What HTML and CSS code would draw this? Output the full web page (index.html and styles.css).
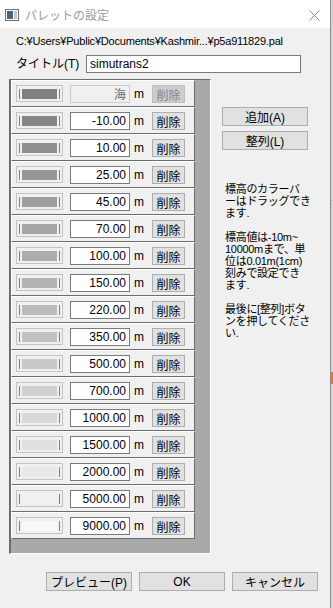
FILE: index.html
```html
<!DOCTYPE html>
<html lang="ja">
<head>
<meta charset="UTF-8" />
<title>パレットの設定</title>
<link rel="stylesheet" href="styles.css">
</head>
<body>
<div class="window">
  <!-- Title bar -->
  <div class="titlebar">
    <svg class="app-icon" width="14" height="12" viewBox="0 0 14 12">
      <rect x="0.5" y="0.5" width="13" height="11" fill="#fff" stroke="#6f6f6f"/>
      <rect x="2" y="2" width="6" height="8" fill="#4a6580"/>
      <rect x="9" y="2" width="3" height="8" fill="#c8c8c8"/>
    </svg>
    <span class="title">パレットの設定</span>
    <svg class="close" width="11" height="11" viewBox="0 0 11 11">
      <path d="M0.5 0.5 L10.5 10.5 M10.5 0.5 L0.5 10.5" stroke="#8a8a8a" stroke-width="1"/>
    </svg>
  </div>

  <div class="path">C:¥Users¥Public¥Documents¥Kashmir...¥p5a911829.pal</div>

  <div class="title-row">
    <label class="title-label">タイトル(T)</label>
    <input class="title-input" value="simutrans2"/>
  </div>

  <div class="main">
    <!-- Height list -->
    <div class="panel">
      <div class="row">
        <div class="swatch"><div class="fill" style="background:#808080"></div></div>
        <input class="height disabled" value="海" disabled/>
        <span class="unit">m</span>
        <button class="del" disabled>削除</button>
      </div>
      <div class="row">
        <div class="swatch"><div class="fill" style="background:#868686"></div></div>
        <input class="height" value="-10.00"/>
        <span class="unit">m</span>
        <button class="del">削除</button>
      </div>
      <div class="row">
        <div class="swatch"><div class="fill" style="background:#8e8e8e"></div></div>
        <input class="height" value="10.00"/>
        <span class="unit">m</span>
        <button class="del">削除</button>
      </div>
      <div class="row">
        <div class="swatch"><div class="fill" style="background:#969696"></div></div>
        <input class="height" value="25.00"/>
        <span class="unit">m</span>
        <button class="del">削除</button>
      </div>
      <div class="row">
        <div class="swatch"><div class="fill" style="background:#9e9e9e"></div></div>
        <input class="height" value="45.00"/>
        <span class="unit">m</span>
        <button class="del">削除</button>
      </div>
      <div class="row">
        <div class="swatch"><div class="fill" style="background:#a6a6a6"></div></div>
        <input class="height" value="70.00"/>
        <span class="unit">m</span>
        <button class="del">削除</button>
      </div>
      <div class="row">
        <div class="swatch"><div class="fill" style="background:#adadad"></div></div>
        <input class="height" value="100.00"/>
        <span class="unit">m</span>
        <button class="del">削除</button>
      </div>
      <div class="row">
        <div class="swatch"><div class="fill" style="background:#b4b4b4"></div></div>
        <input class="height" value="150.00"/>
        <span class="unit">m</span>
        <button class="del">削除</button>
      </div>
      <div class="row">
        <div class="swatch"><div class="fill" style="background:#bbbbbb"></div></div>
        <input class="height" value="220.00"/>
        <span class="unit">m</span>
        <button class="del">削除</button>
      </div>
      <div class="row">
        <div class="swatch"><div class="fill" style="background:#c2c2c2"></div></div>
        <input class="height" value="350.00"/>
        <span class="unit">m</span>
        <button class="del">削除</button>
      </div>
      <div class="row">
        <div class="swatch"><div class="fill" style="background:#c9c9c9"></div></div>
        <input class="height" value="500.00"/>
        <span class="unit">m</span>
        <button class="del">削除</button>
      </div>
      <div class="row">
        <div class="swatch"><div class="fill" style="background:#d0d0d0"></div></div>
        <input class="height" value="700.00"/>
        <span class="unit">m</span>
        <button class="del">削除</button>
      </div>
      <div class="row">
        <div class="swatch"><div class="fill" style="background:#d8d8d8"></div></div>
        <input class="height" value="1000.00"/>
        <span class="unit">m</span>
        <button class="del">削除</button>
      </div>
      <div class="row">
        <div class="swatch"><div class="fill" style="background:#e0e0e0"></div></div>
        <input class="height" value="1500.00"/>
        <span class="unit">m</span>
        <button class="del">削除</button>
      </div>
      <div class="row">
        <div class="swatch"><div class="fill" style="background:#e8e8e8"></div></div>
        <input class="height" value="2000.00"/>
        <span class="unit">m</span>
        <button class="del">削除</button>
      </div>
      <div class="row">
        <div class="swatch"><div class="fill" style="background:#f0f0f0"></div></div>
        <input class="height" value="5000.00"/>
        <span class="unit">m</span>
        <button class="del">削除</button>
      </div>
      <div class="row">
        <div class="swatch"><div class="fill" style="background:#f8f8f8"></div></div>
        <input class="height" value="9000.00"/>
        <span class="unit">m</span>
        <button class="del">削除</button>
      </div>
    </div>

    <!-- Side buttons and help -->
    <div class="side">
      <button class="btn side-btn">追加(A)</button>
      <button class="btn side-btn">整列(L)</button>
      <div class="help">
        <p>標高のカラーバ<br>ーはドラッグでき<br>ます.</p>
        <p>標高値は-10m~<br>10000mまで、単<br>位は0.01m(1cm)<br>刻みで設定でき<br>ます.</p>
        <p>最後に[整列]ボタ<br>ンを押してくださ<br>い.</p>
      </div>
    </div>
  </div>

  <div class="footer">
    <button class="btn">プレビュー(P)</button>
    <button class="btn">OK</button>
    <button class="btn">キャンセル</button>
  </div>
</div>
<div class="backdrop">
  <div class="mark"></div>
</div>
</body>
</html>
```

FILE: styles.css
```css
html, body {
  margin: 0;
  padding: 0;
  height: 100%;
}

body {
  display: flex;
  width: 333px;
  height: 608px;
  overflow: hidden;
  font-family: "Liberation Sans", "Noto Sans CJK JP", sans-serif;
  font-size: 12px;
  color: #000;
  background: #d9d9d9;
}

.window {
  width: 330px;
  height: 608px;
  background: #f0f0f0;
  border-right: 1px solid #8c8c8c;
  display: flex;
  flex-direction: column;
}

.backdrop {
  flex: 1;
  background: linear-gradient(#d4d4d4 0, #d4d4d4 200px, #bdbdbd 200px, #bdbdbd 201px, #d4d4d4 201px);
  position: relative;
}

.mark {
  position: absolute;
  left: 0;
  right: 0;
  top: 372px;
  height: 12px;
  background: #e07a3a;
}

/* title bar */
.titlebar {
  height: 28px;
  background: #fff;
  display: flex;
  align-items: center;
  padding-left: 5px;
  padding-right: 10px;
}

.app-icon {
  margin-top: 1px;
}

.title {
  margin-left: 6px;
  color: #9a9a9a;
  font-size: 12px;
  flex: 1;
}

.close {
  margin-top: 2px;
}

.path {
  padding: 6px 0 0 16px;
  line-height: 14px;
  font-size: 11px;
  letter-spacing: -0.2px;
  white-space: nowrap;
}

.title-row {
  display: flex;
  align-items: center;
  margin-top: 7px;
  padding-left: 16px;
}

.title-label {
  width: 70px;
  line-height: 18px;
}

.title-input {
  width: 207px;
  height: 16px;
  margin: 0;
  padding: 0 3px;
  border: 1px solid #7a7a7a;
  font: inherit;
  background: #fff;
}

.main {
  display: flex;
  margin-top: 6px;
}

/* height list */
.panel {
  margin-left: 9px;
  width: 199px;
  height: 473px;
  background: #a9a9a9;
  border-style: solid;
  border-width: 1px 1px 1px 2px;
  border-color: #6d6d6d #fff #fff #6d6d6d;
}

.row {
  width: 178px;
  height: 25px;
  background: #f0f0f0;
  border-style: solid;
  border-width: 1px;
  border-color: #fff #6d6d6d #6d6d6d #fff;
  display: flex;
  align-items: center;
  padding-left: 4px;
}

.swatch {
  width: 47px;
  height: 17px;
  border: 1px solid #c4c4c4;
  background: #f0f0f0;
  display: flex;
  align-items: center;
  padding: 0 2px;
  box-sizing: border-box;
  flex: none;
}

.fill {
  flex: 1;
  height: 10px;
  border-left: 1px solid #808080;
  border-right: 1px solid #808080;
  padding: 0 2px;
  background-clip: content-box !important;
  box-sizing: border-box;
}

.height {
  margin: 0 0 0 7px;
  width: 55px;
  height: 16px;
  padding: 0 3px 0 0;
  border: 1px solid #7a7a7a;
  text-align: right;
  font: inherit;
  background: #fff;
  color: #000;
  flex: none;
}

.height.disabled {
  background: #f0f0f0;
  border-color: #cccccc;
  color: #6d6d6d;
}

.unit {
  width: 22px;
  padding-left: 4px;
  box-sizing: border-box;
  flex: none;
}

.del {
  width: 33px;
  height: 18px;
  margin: 0;
  padding: 0;
  background: #e1e1e1;
  border: 1px solid #adadad;
  font: inherit;
  color: #000;
  flex: none;
}

.del:disabled {
  background: #cccccc;
  border-color: #bfbfbf;
  color: #838383;
}

/* side column */
.side {
  margin-left: 11px;
  padding-top: 28px;
  display: flex;
  flex-direction: column;
  align-items: flex-start;
}

.btn {
  width: 86px;
  height: 19px;
  margin: 0;
  padding: 0;
  background: #e1e1e1;
  border: 1px solid #adadad;
  font: inherit;
  color: #000;
}

.side-btn + .side-btn {
  margin-top: 5px;
}

.help {
  margin-top: 33px;
  margin-left: 3px;
  white-space: nowrap;
  font-size: 11px;
  letter-spacing: -0.3px;
  line-height: 12px;
}

.help p {
  margin: 0 0 12px;
}

.footer {
  display: flex;
  justify-content: flex-end;
  gap: 7px;
  padding-right: 12px;
  margin-top: 18px;
}
```
